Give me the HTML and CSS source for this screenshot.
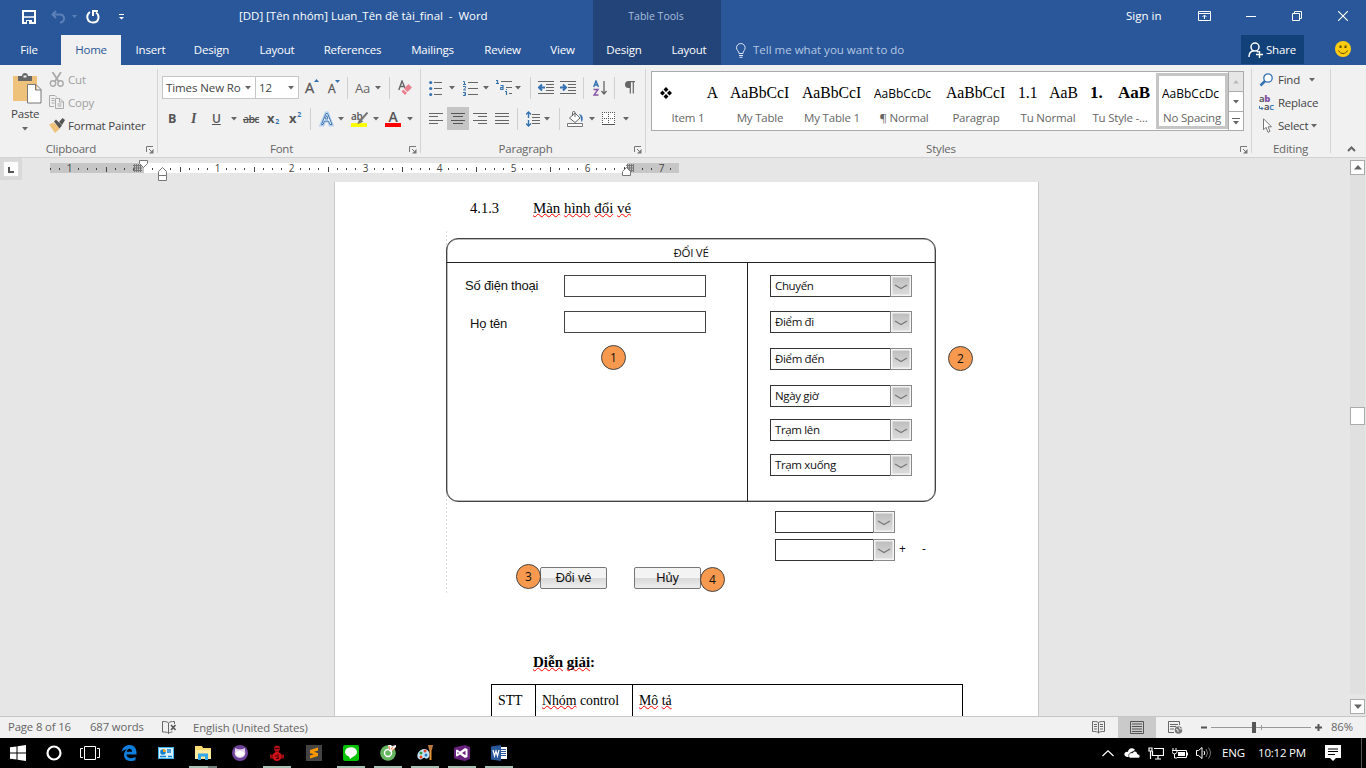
FILE: index.html
```html
<!DOCTYPE html>
<html lang="vi">
<head>
<meta charset="utf-8">
<title>[DD] [Tên nhóm] Luan_Tên đề tài_final - Word</title>
<link rel="stylesheet" href="styles.css">
</head>
<body>
<svg class="defs" width="0" height="0">
  <symbol id="arr" viewBox="0 0 6 4"><path d="M0 0h6L3 3.5z" fill="#666"/></symbol>
  <symbol id="launch" viewBox="0 0 8 8"><path d="M.5 6V.5H7M3 3l3 3" fill="none" stroke="#777"/><path d="M7.500 3v4.500H3z" fill="#777"/></symbol>
  <symbol id="drop" viewBox="0 0 22 22"><rect x=".5" y=".5" width="21" height="21" fill="#f4f4f4" stroke="#888"/><rect x="2.500" y="2.500" width="17" height="17" fill="url(#dg)"/><path d="M5 10l6 3.500 6-3.500" fill="none" stroke="#777" stroke-width="1.200"/></symbol>
  <linearGradient id="dg" x1="0" y1="0" x2="0" y2="1"><stop offset="0" stop-color="#bebebe"/><stop offset="1" stop-color="#dcdcdc"/></linearGradient>
</svg>

<header class="titlebar">
  <div class="qat">
    <svg width="14" height="14" viewBox="0 0 14 14"><path d="M1 1h12v12H1z" fill="none" stroke="#fff" stroke-width="2"/><path d="M1 7h12" stroke="#fff" stroke-width="1.500"/><path d="M4 10h6v4H4z" fill="#fff"/><path d="M5 11h2v3H5z" fill="#2a579a"/></svg>
    <svg width="15" height="14" viewBox="0 0 15 14"><path d="M5 1L1.500 4.500 5 8M2 4.500h6.500c6 0 6 8 .5 8" fill="none" stroke="#5c80b8" stroke-width="2"/></svg>
    <svg width="6" height="4" viewBox="0 0 6 4"><path d="M0 0h5L2.500 3z" fill="#5c80b8"/></svg>
    <svg width="14" height="14" viewBox="0 0 14 14"><path d="M4 2C-.5 5 .8 12.500 7 12.500S14 5 10 2.500" fill="none" stroke="#fff" stroke-width="2"/><path d="M7 6V1h5" fill="none" stroke="#fff" stroke-width="2"/></svg>
    <svg width="6" height="6" viewBox="0 0 6 6"><path d="M0 .5h5" stroke="#fff"/><path d="M0 3h5L2.500 5.500z" fill="#fff"/></svg>
  </div>
  <div class="doc-title">[DD] [Tên nhóm] Luan_Tên đề tài_final&nbsp; -&nbsp; Word</div>
  <div class="tools-title">Table Tools</div>
  <div></div>
  <div class="signin">Sign in</div>
  <svg width="13" height="10" viewBox="0 0 13 10"><path d="M.5.500h12v9H.5zM.5 2.500h12M6.500 8V4.500M4.500 6l2-2 2 2" fill="none" stroke="#fff"/></svg>
  <svg width="10" height="10" viewBox="0 0 10 10"><path d="M0 5.500h10" stroke="#fff"/></svg>
  <svg width="10" height="10" viewBox="0 0 10 10"><path d="M.5 2.500h7v7h-7zM2.500 2.500v-2h7v7h-2" fill="none" stroke="#fff"/></svg>
  <svg width="10" height="10" viewBox="0 0 10 10"><path d="M0 0l10 10M10 0L0 10" stroke="#fff" stroke-width="1.100"/></svg>
</header>

<nav class="tabs">
  <div class="file">File</div><div class="active">Home</div><div>Insert</div><div>Design</div><div>Layout</div><div>References</div><div>Mailings</div><div>Review</div><div>View</div>
  <div class="ctx">Design</div><div class="ctx ctx2">Layout</div>
  <div class="tell"><svg width="10" height="15" viewBox="0 0 10 15"><path d="M3 10.500C3 8 .5 7.500.5 4.800a4.300 4.300 0 0 1 8.600 0C9.100 7.500 7 8 7 10.500zM3 12.500h4M3.500 14.300h3" fill="none" stroke="#dbe5f3"/></svg><span>Tell me what you want to do</span></div>
  <div class="share"><svg width="16" height="16" viewBox="0 0 16 16"><circle cx="7" cy="5" r="4" fill="none" stroke="#fff" stroke-width="1.500"/><path d="M1 15c0-4 2-6 5-6.200M8.500 9l2 1M8 12.500h7M11.500 9v7" fill="none" stroke="#fff" stroke-width="1.400"/></svg><span>Share</span></div>
  <svg class="smile" width="16" height="16" viewBox="0 0 16 16"><circle cx="8" cy="8" r="8" fill="#fc1"/><path d="M4.500 4.500h2v2.500h-2zM9.500 4.500h2v2.500h-2z" fill="#5b4a00"/><path d="M3.500 9.500c2 4 7 4 9 0" fill="none" stroke="#5b4a00"/></svg>
</nav>

<section class="ribbon">
  <div class="group clip">
    <div class="clip-body">
      <div class="paste">
        <svg width="29" height="31" viewBox="0 0 29 31"><path d="M0 3h24v25H0z" fill="#eec27a"/><path d="M5 8V3h4c0-4 6-4 6 0h4v5z" fill="#666"/><path d="M10.500 2.500h3v2h-3z" fill="#f1f1f1"/><path d="M14.500 11.500h8.500l5 5V30H14.500zM22.500 11.500V17H28" fill="#fff" stroke="#777"/></svg>
        <span>Paste</span>
        <svg width="6" height="4"><use href="#arr"/></svg>
      </div>
      <div class="clip-list">
        <div class="dim"><svg width="16" height="15" viewBox="0 0 16 15"><path d="M3.500 0l6.500 10M12 0L5.500 10" stroke="#aaa" stroke-width="1.800"/><circle cx="4" cy="11.500" r="2.700" fill="none" stroke="#aaa" stroke-width="1.400"/><circle cx="11.500" cy="11.500" r="2.700" fill="none" stroke="#aaa" stroke-width="1.400"/></svg><span>Cut</span></div>
        <div class="dim"><svg width="16" height="15" viewBox="0 0 16 15"><path d="M5 11.500H.5V.5H6l2 2M2.500 3.500h3M2.500 5.500h3M2.500 8h3M6.500 3.500H11l3.500 3.500v6.500h-8zM10.500 3.500V7h4M8.500 9h4M8.500 11h4" fill="none" stroke="#aaa"/></svg><span>Copy</span></div>
        <div><svg width="16" height="15" viewBox="0 0 16 15"><path d="M0 6.500l5-2 6 6-5 4.500z" fill="#eec27a"/><path d="M5 3.500l2-2 6 6-2.500 3zM10 4l3.500-4L16 2l-3 5z" fill="#555"/></svg><span>Format Painter</span></div>
      </div>
    </div>
    <div class="glabel"><span>Clipboard</span><svg width="8" height="8"><use href="#launch"/></svg></div>
  </div>

  <div class="group font">
    <div class="row f1">
      <div class="box"><span>Times New Ro</span><svg width="6" height="4"><use href="#arr"/></svg></div>
      <div class="box"><span>12</span><svg width="6" height="4"><use href="#arr"/></svg></div>
      <div class="big">A<svg class="sup" width="5" height="3"><path d="M0 3h5L2.500 0z" fill="#3572b0"/></svg></div>
      <div class="small">A<svg class="sup" width="5" height="3"><path d="M0 0h5L2.500 3z" fill="#3572b0"/></svg></div>
      <i class="sep"></i>
      <div class="aa">Aa</div><svg width="6" height="4"><use href="#arr"/></svg>
      <i class="sep"></i>
      <svg width="15" height="16" viewBox="0 0 15 16"><path d="M.8 10L4 1l3 7M2 6.500h4" fill="none" stroke="#666" stroke-width="1.400"/><path d="M6 8.500L10.500 4 14 7.500 9.500 12zM5.500 9.500l3.500 3.500-2 2L3.500 11.500z" fill="#e8808f"/></svg>
    </div>
    <div class="row f2">
      <b>B</b><em>I</em><u>U</u><svg width="6" height="4"><use href="#arr"/></svg>
      <s>abc</s><div class="x">x<small>2</small></div><div class="x">x<small class="hi">2</small></div>
      <i class="sep"></i>
      <svg width="16" height="16" viewBox="0 0 16 16"><path d="M2 14L7 2h1.500L13 14h-2L9.700 10H5.300L4 14z" fill="#fff" stroke="#b4d0ee" stroke-width="3"/><path d="M2.500 13.500L7 2.500h1.500l4.500 11h-2L9.500 10h-4L4 13.500zM6 8h3L7.700 4.500z" fill="#fff" stroke="#3c75b5"/></svg><svg width="6" height="4"><use href="#arr"/></svg>
      <div class="mark"><span>ab</span><svg class="pen" width="12" height="12" viewBox="0 0 12 12"><path d="M11.500.500L5 8M4 8l1.500 1.500L3 10.500z" stroke="#777" fill="#777" stroke-width="2"/></svg></div><svg width="6" height="4"><use href="#arr"/></svg>
      <div class="mark red"><span>A</span></div><svg width="6" height="4"><use href="#arr"/></svg>
    </div>
    <div class="glabel"><span>Font</span><svg width="8" height="8"><use href="#launch"/></svg></div>
  </div>

  <div class="group para">
    <div class="row p1">
      <svg width="14" height="16" viewBox="0 0 14 16"><path d="M5 2.500h8M5 8.500h8M5 14.500h8" stroke="#666"/><circle cx="1.700" cy="2.500" r="1.600" fill="#3572b0"/><circle cx="1.700" cy="8.500" r="1.600" fill="#3572b0"/><circle cx="1.700" cy="14.500" r="1.500" fill="#3572b0"/></svg><svg width="6" height="4"><use href="#arr"/></svg>
      <svg width="15" height="16" viewBox="0 0 15 16"><path d="M5 2.500h10M5 8.500h10M5 14.500h10" stroke="#666"/><path d="M0 1.500h1.500V4M0 4.500h3M0 6.500h2.500v1.300L.5 10H3M0 12.500h2.500v3H0M1 14h1.500" fill="none" stroke="#3572b0"/></svg><svg width="6" height="4"><use href="#arr"/></svg>
      <svg width="16" height="17" viewBox="0 0 16 17"><path d="M5 2.500h11M10 8.500h6M13 14.500h3" stroke="#666"/><path d="M0 1.500h1.500V4M0 4.500h3M4.500 6.500H7v4H4.700v-2H7M9 12.500h1.500V16M10.500 10v1" fill="none" stroke="#3572b0" stroke-width="1.200"/></svg><svg width="6" height="4"><use href="#arr"/></svg>
      <i class="sep"></i>
      <svg width="16" height="14" viewBox="0 0 16 14"><path d="M0 .5h16M8 3.500h8M8 6.500h8M8 9.500h8M0 12.500h16" stroke="#666"/><path d="M7 6.500H1M4 3.500l-3 3 3 3" fill="none" stroke="#3572b0" stroke-width="2"/></svg>
      <svg width="16" height="14" viewBox="0 0 16 14"><path d="M0 .5h16M8 3.500h8M8 6.500h8M8 9.500h8M0 12.500h16" stroke="#666"/><path d="M0 6.500h6M3 3.500l3 3-3 3" fill="none" stroke="#3572b0" stroke-width="2"/></svg>
      <i class="sep"></i>
      <svg width="15" height="16" viewBox="0 0 15 16"><path d="M.7 7L3 1l2.500 6M1.500 5h3" fill="none" stroke="#3572b0" stroke-width="1.400"/><path d="M.5 9.500H5L1 15h4.500" fill="none" stroke="#8653a5" stroke-width="1.400"/><path d="M11 1v13M8.500 11l2.500 3 2.500-3" fill="none" stroke="#666" stroke-width="1.300"/></svg>
      <i class="sep"></i>
      <svg width="10" height="13" viewBox="0 0 10 13"><path d="M4 0h6v1.200H4z" fill="#666"/><path d="M5 0H3.500a3.500 3.500 0 0 0 0 7H5z" fill="#666"/><path d="M5.300 0v12.500M8.300 0v12.500" stroke="#666" stroke-width="1.200"/></svg>
    </div>
    <div class="row p2">
      <svg width="14" height="12" viewBox="0 0 14 12"><path d="M0 .5h14M0 3.500h9M0 7.500h14M0 10.500h9" stroke="#666"/></svg>
      <div class="sel"><svg width="14" height="12" viewBox="0 0 14 12"><path d="M0 .5h14M2 3.500h10M0 7.500h14M2 10.500h10" stroke="#555"/></svg></div>
      <svg width="14" height="12" viewBox="0 0 14 12"><path d="M0 .5h14M5 3.500h9M0 7.500h14M5 10.500h9" stroke="#666"/></svg>
      <svg width="14" height="12" viewBox="0 0 14 12"><path d="M0 .5h14M0 3.500h14M0 7.500h14M0 10.500h14" stroke="#666"/></svg>
      <i class="sep"></i>
      <svg width="15" height="16" viewBox="0 0 15 16"><path d="M6 3.500h8M6 6.500h8M6 9.500h8M6 12.500h8" stroke="#666"/><path d="M2.500 1v6M2.500 9v6M0 3.500L2.500 1 5 3.500M0 12.500L2.500 15 5 12.500" fill="none" stroke="#3572b0" stroke-width="1.400"/></svg><svg width="6" height="4"><use href="#arr"/></svg>
      <i class="sep"></i>
      <svg width="17" height="16" viewBox="0 0 17 16"><path d="M2.500 7L8 2l5 5-5 4.500z" fill="#fff" stroke="#666"/><path d="M5.500 5V1.500C5.500 0 8 0 8 1.500V6" fill="none" stroke="#666"/><path d="M12 3c4 1 4.500 4 3 8-2-2 0-4-3-8z" fill="#3572b0"/><path d="M.5 12.500h15v3H.5z" fill="#fff" stroke="#777"/></svg><svg width="6" height="4"><use href="#arr"/></svg>
      <svg width="14" height="14" viewBox="0 0 14 14"><path d="M0 0h13v13H0z" fill="#fff"/><path d="M.5 0v12M6.500 0v12M12.500 0v12M0 .5h13M0 6.500h13" stroke="#555" stroke-dasharray="1 1"/><path d="M0 12.500h13" stroke="#555"/></svg><svg width="6" height="4"><use href="#arr"/></svg>
    </div>
    <div class="glabel"><span>Paragraph</span><svg width="8" height="8"><use href="#launch"/></svg></div>
  </div>

  <div class="group styles">
    <div class="gallery">
      <div class="card"><p class="two"><svg width="12" height="12" viewBox="0 0 12 12"><path d="M6 0l2.500 2.500L6 5 3.500 2.500zM6 7l2.500 2.500L6 12 3.500 9.500zM2.500 3.500L5 6 2.500 8.500 0 6zM9.500 3.500L12 6 9.500 8.500 7 6z"/></svg><span>A</span></p><span>Item 1</span></div>
      <div class="card"><p>AaBbCcI</p><span>My Table</span></div>
      <div class="card"><p>AaBbCcI</p><span>My Table 1</span></div>
      <div class="card"><p class="sans">AaBbCcDc</p><span>¶ Normal</span></div>
      <div class="card"><p>AaBbCcI</p><span>Paragrap</span></div>
      <div class="card"><p class="two num"><span>1.1</span><span>AaB</span></p><span>Tu Normal</span></div>
      <div class="card"><p class="two bold"><span>1.</span><span>AaB</span></p><span>Tu Style -...</span></div>
      <div class="card chosen"><p class="sans">AaBbCcDc</p><span>No Spacing</span></div>
      <div class="gscroll"><div class="off"><svg width="6" height="4" viewBox="0 0 6 4"><path d="M0 3.500h6L3 0z" fill="#bbb"/></svg></div><div><svg width="6" height="4"><use href="#arr"/></svg></div><div><svg width="8" height="7" viewBox="0 0 8 7"><path d="M0 .5h8" stroke="#666"/><path d="M1 3h6L4 6.500z" fill="#666"/></svg></div></div>
    </div>
    <div class="glabel"><span>Styles</span><svg width="8" height="8"><use href="#launch"/></svg></div>
  </div>

  <div class="group edit">
    <div class="edit-list">
      <div><svg width="16" height="14" viewBox="0 0 16 14"><circle cx="9" cy="5" r="4.200" fill="#fff" stroke="#3572b0" stroke-width="1.300"/><path d="M6 8l-4.500 4.500" stroke="#3572b0" stroke-width="2.500"/></svg><span class="find">Find</span><svg width="6" height="4"><use href="#arr"/></svg></div>
      <div><div class="rep"><span>a<b>b</b></span><span class="to"><svg width="5" height="5" viewBox="0 0 5 5"><path d="M.5 0v2.500H4M2.500 1L4 2.500 2.500 4" fill="none" stroke="#3572b0"/></svg>a<em>c</em></span></div><span>Replace</span></div>
      <div><svg width="16" height="15" viewBox="0 0 16 15"><path d="M4.500.8v11l2.500-2.500 2 5 2-1-2-4.500h3.500z" fill="#fff" stroke="#777"/></svg><span class="select">Select</span><svg width="6" height="4"><use href="#arr"/></svg></div>
    </div>
    <div class="glabel"><span>Editing</span></div>
  </div>
  <svg class="collapse" width="9" height="6" viewBox="0 0 9 6"><path d="M1 5l3.500-3.500L8 5" fill="none" stroke="#666" stroke-width="2"/></svg>
</section>

<main class="work">
  <div class="left">
    <div class="rulerbar">
      <div class="tabstop"><svg width="16" height="16" viewBox="0 0 16 16"><path d="M.5.500h15v15H.5z" fill="#fdfdfd" stroke="#ddd"/><path d="M6 6v5h5" fill="none" stroke="#555" stroke-width="2"/></svg></div>
      <svg class="ruler" width="660" height="24" viewBox="0 0 660 24">
        <defs><pattern id="tk" x="93" y="0" width="74" height="24" patternUnits="userSpaceOnUse"><path d="M9 10h1v2H9zM18 10h1v2h-1zM27 10h1v2h-1zM37 9h1v5h-1zM46 10h1v2h-1zM55 10h1v2h-1zM64 10h1v2h-1z" fill="#444"/></pattern></defs>
        <path d="M0 5h94v10H0zM577 5h52v10h-52z" fill="#c6c6c6"/><path d="M94 5h483v10H94z" fill="#fff"/>
        <path d="M0 0h629v24H0z" fill="url(#tk)"/>
        <g class="nums"><text x="19.500" y="14">1</text><text x="167.500" y="14">1</text><text x="241.500" y="14">2</text><text x="315.500" y="14">3</text><text x="389.500" y="14">4</text><text x="463.500" y="14">5</text><text x="537.500" y="14">6</text><text x="611.500" y="14">7</text></g>
        <path d="M84.500 6v8M86.500 6v8M88.500 6v8M90.500 6v8M83 7.500h9M83 10h9M83 12.500h9M577.500 6v8M579.500 6v8M581.500 6v8M583.500 6v8M576 7.500h8M576 10h8M576 12.500h8" stroke="#777"/>
        <path d="M89.500 2.500h8v3l-4 4-4-4z" fill="#fff" stroke="#777"/>
        <path d="M108.500 17.500v-4l4-4 4 4v4zM108.500 17.500h8v5h-8z" fill="#fff" stroke="#777"/>
        <path d="M572.500 17.500v-4l4-4 4 4v4z" fill="#fff" stroke="#777"/>
      </svg>
    </div>
    <article class="page">
      <h3><span>4.1.3</span><span><u>Màn</u> <u>hình</u> <u>đổi</u> <u>vé</u></span></h3>
      <div class="figure">
        <div class="panel">
          <div class="phead">ĐỔI VÉ</div>
          <div class="pbody">
            <div class="fields">
              <div class="field"><label>Số điện thoại</label><i></i></div>
              <div class="field two"><label>Họ tên</label><i></i></div>
            </div>
            <div class="combos">
              <div class="combo"><span>Chuyến</span><svg width="22" height="22"><use href="#drop"/></svg></div>
              <div class="combo m14"><span>Điểm đi</span><svg width="22" height="22"><use href="#drop"/></svg></div>
              <div class="combo m15"><span>Điểm đến</span><svg width="22" height="22"><use href="#drop"/></svg></div>
              <div class="combo m15"><span>Ngày giờ</span><svg width="22" height="22"><use href="#drop"/></svg></div>
              <div class="combo m12"><span>Trạm lên</span><svg width="22" height="22"><use href="#drop"/></svg></div>
              <div class="combo m13"><span>Trạm xuống</span><svg width="22" height="22"><use href="#drop"/></svg></div>
            </div>
          </div>
        </div>
        <div class="extra"><div class="combo short"><span></span><svg width="22" height="22"><use href="#drop"/></svg></div></div>
        <div class="extra e2"><div class="combo short"><span></span><svg width="22" height="22"><use href="#drop"/></svg></div><span class="plus">+</span><span>-</span></div>
        <div class="btns"><div class="btn">Đổi vé</div><div class="btn">Hủy</div></div>
        <div class="bubble b1">1</div><div class="bubble b2">2</div><div class="bubble b3">3</div><div class="bubble b4">4</div>
      </div>
      <h4><u>Diễn</u> <u>giải</u>:</h4>
      <div class="table"><div>STT</div><div><u>Nhóm</u> control</div><div><u>Mô</u> <u>tả</u></div></div>
    </article>
  </div>
  <div class="vscroll">
    <div class="sb"><svg width="8" height="5" viewBox="0 0 8 5"><path d="M0 4.500h8L4 0z" fill="#666"/></svg></div>
    <div class="thumb"></div>
    <div class="sb"><svg width="8" height="5" viewBox="0 0 8 5"><path d="M0 .5h8L4 5z" fill="#666"/></svg></div>
  </div>
</main>

<footer class="status">
  <span>Page 8 of 16</span><span>687 words</span>
  <svg width="15" height="13" viewBox="0 0 15 13"><path d="M6.500 12.500V2C5 .5 3 .5.500.500v10.500c3 0 5 0 6 1.500 1-1 2-1.500 4-1.500M6.500 2C8 .5 10 .5 12.500.500V3" fill="none" stroke="#666"/><path d="M9 4l4.500 5M13.500 4L9 9" stroke="#555" stroke-width="1.600"/></svg>
  <span class="lang">English (United States)</span>
  <svg width="14" height="13" viewBox="0 0 14 13"><path d="M6.500 12V1.500C5 .5 3 .5.500.500v10c3 0 5 0 6 1.500 1-1.500 3-1.500 6-1.500v-10c-2.500 0-4.500 0-6 1M2 3.500h3M2 5.500h3M2 8h3M8 3.500h3M8 5.500h3M8 8h3" fill="none" stroke="#666"/></svg>
  <div class="view"><svg width="14" height="13" viewBox="0 0 14 13"><path d="M.5.500h13v12H.5zM2 3h10M2 5.500h10M2 8h10M2 10.500h10" fill="none" stroke="#555"/></svg></div>
  <svg width="15" height="13" viewBox="0 0 15 13"><path d="M6 11.500H.5V.5h11V4M2 3.500h8M2 5.500h6M2 8h4" fill="none" stroke="#666"/><circle cx="10.500" cy="9" r="3.800" fill="#777"/><path d="M8 8l2 1v2M11 6l1 2 2 0" stroke="#eee" fill="none"/></svg>
  <svg width="122" height="13" viewBox="0 0 122 13"><path d="M0 6.500h6M114 6.500h7M117.500 3v7" stroke="#555" stroke-width="2"/><path d="M10 6.500h100M60.500 4v5" stroke="#999"/><path d="M51 1h4v11h-4z" fill="#555"/></svg>
  <span>86%</span>
</footer>

<div class="taskbar">
  <div class="sys"><svg width="16" height="16" viewBox="0 0 16 16"><path d="M0 2.300L6.500 1.400v6H0zM7.500 1.200L16 0v7.400H7.500zM0 8.500h6.500v6.100L0 13.700zM7.500 8.500H16V16l-8.500-1.200z" fill="#fff"/></svg></div>
  <div class="sys"><svg width="16" height="16" viewBox="0 0 16 16"><circle cx="8" cy="8" r="6.500" fill="none" stroke="#fff" stroke-width="2.200"/></svg></div>
  <div class="sys third"><svg width="20" height="14" viewBox="0 0 20 14"><path d="M4.500.500h11v13h-11zM3 2.500H.5v9H3M17 2.500h2.500v9H17" fill="none" stroke="#fff"/></svg></div>
  <div class="app"><svg width="16" height="16" viewBox="0 0 16 16"><path d="M.5 7C1.500 2 5 0 8.500 0 13 0 15.500 3.500 15.500 7.500V9.500H5.500c.3 4 5.500 4.500 9 2.500v3c-4 2-11.500 1.500-11.500-5C3 7.500 4.200 5.500 6 4.500 3.500 4.700 1.500 5.500.5 7zM5.700 6.700H11c0-4-4.700-3.700-5.300 0z" fill="#0f7fdf" fill-rule="evenodd"/></svg></div>
  <div class="app"><svg width="16" height="12" viewBox="0 0 16 12"><path d="M0 0h16v12H0z" fill="#3db2ed"/><path d="M1 1h14v10H1z" fill="#d8f1ff"/><circle cx="5" cy="5" r="2.800" fill="#1480cf"/><path d="M5 5V2a3 3 0 0 1 3 3z" fill="#f6a01a"/><path d="M9 3h4M9 5h4M2 9.500h6M10 9.500h4" stroke="#1480cf" stroke-width="1.500"/></svg></div>
  <div class="app run multi"><svg width="16" height="14" viewBox="0 0 16 14"><path d="M0 0h7l1 2h8v11H0z" fill="#fbdc73"/><path d="M0 4h16v9H0z" fill="#ffeaa0"/><path d="M3 14V7.500h10V14h-3v-3.500H6V14z" fill="#32a6e6"/></svg></div>
  <div class="app"><svg width="16" height="16" viewBox="0 0 16 16"><circle cx="8" cy="8" r="8" fill="#6e4399"/><path d="M3.300 3l2.500 1.200h4.400L12.700 3l.6 4.500c.4 7-11 7-10.600 0z" fill="#e8d9f0"/><ellipse cx="8" cy="8.700" rx="4" ry="2.700" fill="#fff"/></svg></div>
  <div class="app run"><svg width="14" height="16" viewBox="0 0 14 16"><circle cx="7" cy="3.500" r="3" fill="#b31015"/><path d="M5 6h4v2H5z" fill="#8b0a0e"/><circle cx="7" cy="11.500" r="4.500" fill="#cf1218"/><path d="M0 9.500h3v4H0zM11 9.500h3v4h-3z" fill="#9b0b10"/><path d="M4.500 3.500h5M5 11h2M8 9v4M6 13.500h3" stroke="#3a0000"/></svg></div>
  <div class="app"><svg width="16" height="16" viewBox="0 0 16 16"><path d="M0 0h16v16H0z" fill="#444"/><path d="M12 2.500v3L8 6.800l4 1.500V11L4 13.500v-3L8 9.300 4 8V5z" fill="#ff9800"/></svg></div>
  <div class="app run"><svg width="16" height="16" viewBox="0 0 16 16"><rect width="16" height="16" rx="2" fill="#00c300"/><ellipse cx="8" cy="7" rx="6" ry="4.800" fill="#fff"/><path d="M6 11h5l-4 3z" fill="#fff"/></svg></div>
  <div class="app run"><svg width="16" height="16" viewBox="0 0 16 16"><circle cx="8" cy="8" r="7.800" fill="#65b561"/><circle cx="8" cy="8" r="3.500" fill="none" stroke="#fff" stroke-width="1.400"/><path d="M9 6l-1-6h3l1 1 4-1v2l-5 5z" fill="#fff"/><path d="M9.500 4.500L9 1M11 4.500l2-3M12 5.500l3-2" stroke="#f4703c"/></svg></div>
  <div class="app run"><svg width="16" height="16" viewBox="0 0 16 16"><path d="M1 8c3-5 9-5 11-1 2 5-2 8-4 6-2-1-3 3-6 1-2-1-2-4-1-6z" fill="#bfe3f4"/><circle cx="4" cy="8" r="1.500" fill="#2e9b38"/><circle cx="8" cy="6" r="1.500" fill="#e24431"/><circle cx="4" cy="12" r="1.500" fill="#f04020"/><circle cx="9" cy="10" r="1.500" fill="#2879c9"/><path d="M13.500 4v11" stroke="#e89134" stroke-width="2"/><path d="M11 0h5l-1 5h-3z" fill="#b77b42"/></svg></div>
  <div class="app run"><svg width="16" height="16" viewBox="0 0 16 16"><path d="M0 3l2-1 9-2 5 2v12l-5 2-9-2-2-1z" fill="#68217a"/><path d="M2 5l1-.5 3 2L11 3l2.500 1v8L11 13 6 9.500l-3 2L2 11zM3.500 6.800v2.400L5 8zM11.500 5.800L8 8l3.500 2.200z" fill="#fff" fill-rule="evenodd"/></svg></div>
  <div class="app run"><svg width="16" height="16" viewBox="0 0 16 16"><path d="M8 2h8v12H8z" fill="#fff"/><path d="M10 4.500h5M10 6.500h5M10 8.500h5M10 10.500h5" stroke="#2a579a"/><path d="M0 1.500L10 0v16L0 14.500z" fill="#2a579a"/><path d="M2 5l1.500 6L5 6l1.500 5L8 5" fill="none" stroke="#fff" stroke-width="1.200"/></svg></div>
  <div class="tray">
    <svg width="12" height="7" viewBox="0 0 12 7"><path d="M.5 6L6 .8 11.500 6" fill="none" stroke="#fff" stroke-width="1.200"/></svg>
    <svg width="16" height="10" viewBox="0 0 16 10"><path d="M1 8C-1 5 2 3 4 4c0-4 5-5 7-2L6 5v4H3z" fill="#fff"/><path d="M5.500 10C3 6 7 4 8.500 5c1-3 5-2 5 1 3 0 3 4 1 4z" fill="#fff" stroke="#000" stroke-width=".6"/></svg>
    <svg width="16" height="13" viewBox="0 0 16 13"><path d="M6 1.500h9.500v7H4.500V4M10 8.500v3M7 12h6M1 1h3v3H1zM2.500 4v8" fill="none" stroke="#fff" stroke-width="1.200"/></svg>
    <svg width="16" height="12" viewBox="0 0 16 12"><path d="M6 5h7v4H6z" fill="#fff"/><path d="M5 3.500h9.500v7H5M15.500 5.500v3M1 1v2M4 1v2M0 3.500h5v2L3 7H2L0 5.500zM2.500 7v4H5" fill="none" stroke="#fff"/></svg>
    <svg width="16" height="14" viewBox="0 0 16 14"><path d="M.5 4.500h2L6 1.500v11L2.500 9.500h-2zM8 5q1.500 2 0 4" fill="none" stroke="#fff"/><path d="M10 3q3 4 0 8M12.500 1.500q4 5.500 0 11" fill="none" stroke="#777"/></svg>
    <span>ENG</span><span>10:12 PM</span>
    <svg width="16" height="16" viewBox="0 0 16 16"><path d="M0 0h16v13h-5l-3 3-3-3H0z" fill="#fff"/><path d="M3 4h10M3 6.500h10M3 9.500h7" stroke="#000"/></svg>
    <i></i>
  </div>
</div>
</body>
</html>
```
FILE: styles.css
```css
* { box-sizing: border-box; }
body { margin: 0; width: 1366px; height: 768px; overflow: hidden; display: flex; flex-direction: column; font: 11.5px/16px "Open Sans", "Noto Sans", sans-serif; letter-spacing: -0.2px; color: #444; background: #e6e6e6; }
svg { display: block; flex: none; }
.defs { position: absolute; }
p, h3, h4 { margin: 0; font-weight: normal; }

.titlebar { flex: none; height: 35px; background: #2a579a; color: #fff; display: grid; grid-template-columns: 239px 354px 128px 404px 73px 48px 46px 46px 28px; align-items: center; }
.titlebar > svg, .titlebar > .signin, .doc-title { margin-bottom: 4px; }
.titlebar > .signin { letter-spacing: 0; padding-left: 1px; }
.qat { display: grid; grid-template-columns: 29px 21px 14px 33px 10px; padding: 0 0 2px 22px; align-items: center; }
.doc-title { white-space: nowrap; letter-spacing: -.02px; }
.tools-title { align-self: stretch; background: #224479; color: #a9bfdd; text-align: center; line-height: 32px; font-size: 10.5px; letter-spacing: 0; padding-right: 2px; }

.tabs { flex: none; height: 30px; background: #2a579a; color: #fff; display: grid; grid-template-columns: 61px 60px 59px 63px 68px 83px 77px 63px 57px 64px 66px 520px 63px 62px; line-height: 30px; text-align: center; }
.tabs > .file { padding-right: 3px; }
.tabs > .active { background: #f1f1f1; color: #2a579a; }
.tabs > .ctx { background: #224479; margin-left: 2px; }
.tabs > .ctx2 { margin-left: 0; padding-left: 2px; }
.tell { display: flex; align-items: center; gap: 7px; padding-left: 15px; color: #b5c8e4; letter-spacing: 0; }
.share { background: #124078; height: 29px; display: flex; align-items: center; gap: 2px; padding-left: 7px; }
.smile { margin: 6px 0 0 31px; }

.ribbon { flex: none; height: 93px; background: #f1f1f1; border-bottom: 1px solid #d2d2d2; display: flex; }
.group { height: 92px; display: flex; flex-direction: column; background: linear-gradient(#d4d4d4, #d4d4d4) right 0 top 4px / 1px 84px no-repeat; }
.glabel { margin-top: auto; height: 17px; display: flex; align-items: flex-start; color: #666; }
.glabel span { flex: 1; text-align: center; padding-left: 4px; line-height: 17px; }
.glabel svg { margin: 6px 4px 0 8px; }
.clip { width: 158px; }
.clip-body { display: flex; height: 75px; }
.paste { width: 49px; padding: 8px 0 0 13px; }
.paste span { display: block; margin: 2px 0 5px -2px; }
.paste svg:last-child { margin-left: 9px; }
.clip-list { padding-top: 3px; }
.clip-list > div { display: flex; gap: 3px; height: 23px; align-items: center; white-space: nowrap; }
.dim { color: #a0a0a0; }

.row { display: grid; align-items: center; height: 23px; }
.row > * { justify-self: start; }
.sep { width: 1px; height: 22px; background: #d0d0d0; }
.font { width: 263px; padding-top: 11px; }
.f1 { padding-left: 4px; grid-template-columns: 94px 49px 23px 19px 8px 20px 14px 9px 20px; }
.box { height: 23px; border: 1px solid #c6c6c6; background: #fff; display: flex; align-items: center; justify-content: space-between; padding: 0 4px 0 3px; width: 94px; letter-spacing: -.1px; }
.box + .box { width: 44px; margin-left: -1px; }
.big, .small { display: flex; font-size: 14.5px; color: #555; -webkit-text-stroke: .3px #555; }
.small { font-size: 12px; padding-top: 2px; }
.sup { margin-top: -1px; }
.aa { font-size: 13px; color: #666; }
.f2 { margin-top: 8px; padding-left: 10px; grid-template-columns: 23px 21px 19px 12px 24px 22px 21px 9px 19px 13px 22px 12px 22px 8px; height: 23px; color: #555; }
.f2 > b { font-size: 12.5px; }
.f2 > em { font: italic bold 14px "Liberation Serif", serif; }
.f2 > u { font-size: 12px; font-weight: 600; }
.f2 > s { font-size: 10.5px; font-weight: 600; letter-spacing: -.7px; }
.x { font-size: 13px; font-weight: 700; display: flex; height: 16px; line-height: 14px; }
.x small { font-size: 7px; line-height: 22px; color: #3572b0; margin-left: 1px; }
.x .hi { line-height: 8px; }
.mark { width: 16px; height: 16px; border-bottom: 4px solid #ff0; display: flex; font-size: 10px; font-weight: 600; line-height: 10px; position: relative; }
.mark .pen { position: absolute; left: 5px; top: 1px; }
.mark.red { border-color: #f00; font-size: 14px; justify-content: center; line-height: 11px; }
.para { width: 225px; padding-top: 11px; }
.p1 { padding-left: 8px; grid-template-columns: 21px 13px 21px 12px 20px 14px 8px 22px 23px 10px 21px 11px 12px; }
.p1 > svg[width="6"] { margin-left: -1px; }
.p2 { margin-top: 8px; padding-left: 8px; grid-template-columns: 18px 26px 22px 22px 9px 18px 15px 8px 22px 13px 21px 8px; }
.sel { width: 22px; height: 23px; background: #c5c5c5; display: grid; place-items: center; }

.styles { width: 606px; padding: 6px 0 0 5px; }
.styles .glabel span { padding: 0 1px 0 0; }
.gallery { width: 593px; height: 60px; border: 1px solid #ababab; background: #fff; display: flex; }
.card { width: 72px; height: 58px; text-align: center; color: #666; padding: 12px 0 0; white-space: nowrap; }
.card > span { display: block; margin-top: 9px; line-height: 14px; }
.card p { width: 62px; height: 18px; margin: 0 0 0 6px; text-align: left; color: #000; font: 15.700px/18px "Liberation Serif", serif; letter-spacing: 0; }
.card p.two { display: flex; justify-content: space-between; align-items: center; width: 60px; padding-left: 2px; }
.card p.num { padding-left: 0; }
.card p.bold { font-weight: bold; padding-left: 0; font-size: 17px; }
.card p.sans { font: 12px/20px "Open Sans", sans-serif; letter-spacing: 0; }
.chosen { margin-top: 1px; height: 56px; border: 3px solid #c5c5c5; padding-top: 8px; }
.chosen p.sans { margin-left: 3px; }
.gscroll { width: 15px; border-left: 1px solid #ababab; display: grid; grid-template-rows: 20px 20px 18px; }
.gscroll div { display: grid; place-items: center; border-bottom: 1px solid #ababab; }
.gscroll div:last-child { border: 0; }
.off { background: #e6e6e6; }

.edit { width: 79px; }
.edit-list { padding: 3px 0 0 7px; }
.edit-list > div { display: flex; height: 23px; align-items: center; gap: 3px; white-space: nowrap; letter-spacing: -.25px; }
.find { margin-right: 6px; }
.rep { width: 16px; font-size: 9.5px; line-height: 9px; font-weight: 600; margin-bottom: 2px; }
.rep span { display: block; height: 8px; }
.rep .to { display: flex; }
.to svg { margin-top: 4px; }
.rep b { color: #8653a5; }
.rep em { font-style: normal; color: #3572b0; }
.edit .glabel span { padding: 0 2px 0 0; }
.collapse { margin: 81px 0 0 16px; }

.work { flex: none; height: 558px; display: flex; background: #e6e6e6; overflow: hidden; }
.left { width: 1350px; }
.rulerbar { height: 24px; display: flex; }
.tabstop { width: 22px; height: 22px; background: #d9d9d9; padding: 3px; }
.ruler { margin-left: 28px; }
.nums { font: 10px "Open Sans", sans-serif; text-anchor: middle; fill: #444; }
.vscroll { width: 16px; padding: 2px 1px 2px 0; display: flex; flex-direction: column; background: linear-gradient(#e0e0e0, #e0e0e0) 0 16px / 15px 520px no-repeat; }
.sb { width: 15px; height: 15px; border: 1px solid #ababab; background: #fff; display: grid; place-items: center; }
.thumb { width: 15px; height: 18px; border: 1px solid #ababab; background: #fff; margin: auto 0 274px; }

.page { width: 705px; height: 534px; margin-left: 334px; background: #fff; border: solid #c9c9c9; border-width: 0 1px; font-family: "Liberation Serif", serif; color: #000; letter-spacing: 0; overflow: hidden; }
.page u { text-decoration: underline wavy #f00 .8px; text-underline-offset: 0; text-decoration-skip-ink: none; }
.page h3 { font-size: 14.9px; line-height: 18px; padding: 17px 0 0 135px; height: 49px; display: grid; grid-template-columns: 63px 1fr; }
.page h3 span:first-child { font-size: 14.5px; }
.figure { position: relative; margin-left: 111px; width: 540px; height: 362px; padding-top: 7px; background: repeating-linear-gradient(#ddd 0 2px, #fff 2px 4px) left top / 1px 100% no-repeat; font: 12px/16px "Open Sans", sans-serif; letter-spacing: -.1px; color: #111; }
.panel { width: 490px; height: 264px; border: 1px solid #444; box-shadow: inset 0 0 0 .5px #777; border-radius: 12px; }
.phead { height: 24px; line-height: 27px; text-align: center; border-bottom: 1px solid #222; font-size: 11.5px; letter-spacing: -.3px; }
.pbody { display: grid; grid-template-columns: 301px 1fr; height: 238px; }
.fields { border-right: 1px solid #222; padding: 12px 0 0 18px; font: 13px/22px "Liberation Sans", sans-serif; letter-spacing: -.2px; }
.field { display: grid; grid-template-columns: 99px 142px; height: 22px; }
.field.two { margin-top: 14px; }
.field.two label { padding: 2px 0 0 5px; }
.field i { border: 1px solid #444; height: 22px; }
.combos { padding: 12px 0 0 22px; }
.combo { width: 142px; height: 22px; display: flex; font-size: 11.5px; letter-spacing: -.35px; }
.combo span { flex: 1; border: 1px solid #333; border-right: 0; padding-left: 4px; line-height: 19px; }
.m12 { margin-top: 12px; } .m13 { margin-top: 13px; } .m14 { margin-top: 14px; } .m15 { margin-top: 15px; }
.combo.short { width: 120px; }
.extra { padding: 9px 0 0 329px; display: flex; line-height: 20px; }
.e2 { padding-top: 6px; }
.plus { width: 27px; padding-left: 4px; }
.btns { display: flex; gap: 27px; padding: 6px 0 0 94px; }
.btn { width: 67px; height: 22px; border: 1px solid #777; border-radius: 2px; background: linear-gradient(#f3f3f3 0 48%, #d9d9d9 52%, #eee); text-align: center; font: 12.800px/19px "Liberation Sans", sans-serif; }
.bubble { position: absolute; width: 25px; height: 25px; border: 1px solid #444; border-radius: 50%; background: #f79a50; text-align: center; line-height: 23px; font-size: 12px; }
.b1 { left: 155px; top: 114px; } .b2 { left: 502px; top: 115px; } .b3 { left: 70px; top: 333px; } .b4 { left: 254px; top: 336px; }
.page h4 { font-weight: bold; font-size: 15px; line-height: 18px; padding: 60px 0 0 198px; height: 91px; }
.table { margin-left: 156px; width: 472px; height: 40px; border: 1px solid #000; display: grid; grid-template-columns: 43px 97px 1fr; font-size: 13.800px; line-height: 31px; }
.table div { padding-left: 6px; border-left: 1px solid #000; }
.table div:first-child { border: 0; }

.status { flex: none; height: 22px; background: #f1f1f1; border-top: 1px solid #c6c6c6; display: grid; align-items: center; padding-left: 8px; grid-template-columns: 82px 72px 31px 899px 26px 50px 33px 130px 34px; color: #666; white-space: nowrap; font-size: 11.3px; letter-spacing: -.12px; margin-top: 0; line-height: 14px; }
.status > span { margin-top: -1px; }
.status > .lang { margin-top: 0; }
.view { width: 38px; height: 21px; background: #cacaca; display: grid; place-items: center; }
.taskbar { flex: none; height: 30px; background: #000; display: flex; }
.sys { width: 36px; display: grid; place-items: center; }
.third { width: 38px; padding-right: 2px; }
.app { width: 37px; display: grid; place-items: center; }
.run { background: linear-gradient(#a5bfb1, #a5bfb1) 5px 28px / 28px 2px no-repeat; }
.multi { background: linear-gradient(90deg, #a5bfb1 19px, #71837a 19px) 5px 28px / 28px 2px no-repeat; }
.tray { margin-left: 585px; display: grid; grid-template-columns: 22px 24px 24px 24px 26px 36px 67px 36px 2px; align-items: center; color: #fff; white-space: nowrap; }
.tray i { width: 1px; height: 30px; background: #555; }
```
